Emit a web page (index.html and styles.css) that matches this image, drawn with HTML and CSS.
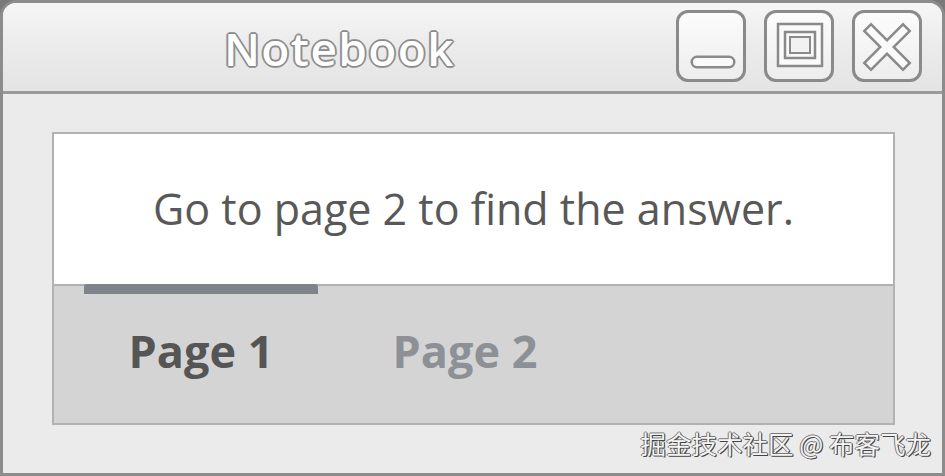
FILE: index.html
```html
<!DOCTYPE html>
<html lang="en">
<head>
    <meta charset="UTF-8">
    <title>Notebook</title>
    <link rel="stylesheet" href="styles.css">
</head>
<body>
    <div class="window">
        <div class="titlebar">
            <div class="title">Notebook</div>
            <div class="controls">
                <button class="win-btn">
                    <svg viewBox="0 0 70 72" width="70" height="72">
                        <line x1="21" y1="52" x2="53" y2="52" stroke="#8a8a8a" stroke-width="13" stroke-linecap="round"/>
                        <line x1="21" y1="52" x2="53" y2="52" stroke="#fafafa" stroke-width="8" stroke-linecap="round"/>
                    </svg>
                </button>
                <button class="win-btn">
                    <svg viewBox="0 0 70 72" width="70" height="72">
                        <rect x="14" y="14" width="44" height="42" fill="#fafafa" stroke="#8a8a8a" stroke-width="2.5"/>
                        <rect x="21" y="22" width="30" height="26" fill="none" stroke="#8a8a8a" stroke-width="2.5"/>
                        <rect x="26" y="27" width="20" height="16" fill="#f2f2f2" stroke="#8a8a8a" stroke-width="2"/>
                    </svg>
                </button>
                <button class="win-btn">
                    <svg viewBox="0 0 70 72" width="70" height="72">
                        <path d="M19 21 L51 53 M51 21 L19 53" stroke="#8a8a8a" stroke-width="12" stroke-linecap="square"/>
                        <path d="M19 21 L51 53 M51 21 L19 53" stroke="#fafafa" stroke-width="7" stroke-linecap="square"/>
                    </svg>
                </button>
            </div>
        </div>
        <div class="content">
            <div class="notebook">
                <div class="page">Go to page 2 to find the answer.</div>
                <div class="tabs">
                    <div class="tab active">Page 1</div>
                    <div class="tab">Page 2</div>
                </div>
            </div>
            <div class="watermark">掘金技术社区 @ 布客飞龙</div>
        </div>
    </div>
</body>
</html>
```

FILE: styles.css
```css
html, body {
    margin: 0;
    padding: 0;
    width: 945px;
    height: 476px;
    overflow: hidden;
    background: #7a7a7a;
}
.window {
    box-sizing: border-box;
    width: 945px;
    height: 476px;
    border: 3px solid #8c8c8c;
    border-radius: 16px 16px 0 0;
    background: #ebebeb;
    display: flex;
    flex-direction: column;
    overflow: hidden;
    font-family: "Open Sans", "Noto Sans", sans-serif;
}
.titlebar {
    height: 88px;
    flex-shrink: 0;
    display: flex;
    align-items: flex-start;
    background: linear-gradient(#f6f6f6, #ececec 45%, #e4e4e4);
    border-bottom: 3px solid #9a9a9a;
}
.title {
    flex: 1;
    text-align: center;
    font-size: 46px;
    font-weight: 600;
    line-height: 46px;
    margin-top: 22px;
    color: #ffffff;
    letter-spacing: 1.4px;
    text-shadow: 1px 1px 0 #8a8a8a, -1px -1px 0 #8a8a8a, 1px -1px 0 #8a8a8a, -1px 1px 0 #8a8a8a,
                 2px 0 0 #9a9a9a, -2px 0 0 #9a9a9a, 0 2px 0 #9a9a9a, 0 -2px 0 #9a9a9a;
}
.controls {
    display: flex;
    gap: 18px;
    padding: 7px 20px 0 0;
}
.win-btn {
    box-sizing: border-box;
    width: 70px;
    height: 72px;
    padding: 0;
    border: 3px solid #8a8a8a;
    border-radius: 12px;
    background: linear-gradient(#fcfcfc, #ededed);
    display: flex;
    align-items: center;
    justify-content: center;
    overflow: hidden;
}
.win-btn svg {
    flex-shrink: 0;
}
.content {
    flex: 1;
    display: flex;
    flex-direction: column;
    padding: 38px 47px 0 49px;
}
.notebook {
    height: 289px;
    display: flex;
    flex-direction: column;
    border: 2px solid #b2b2b2;
    background: #d4d4d4;
}
.page {
    height: 152px;
    flex-shrink: 0;
    background: #ffffff;
    display: flex;
    align-items: center;
    justify-content: center;
    font-size: 43px;
    color: #585858;
    border-bottom: 2px solid #b0b0b0;
    padding-bottom: 2px;
    box-sizing: border-box;
}
.tabs {
    flex: 1;
    display: flex;
    gap: 30px;
    padding-left: 30px;
    margin-top: -2px;
}
.tab {
    width: 234px;
    display: flex;
    align-items: center;
    justify-content: center;
    font-size: 45px;
    font-weight: 700;
    color: #8d9196;
    border-top: 10px solid transparent;
    padding-bottom: 16px;
}
.tab.active {
    color: #555555;
    border-top-color: #7f848a;
    border-radius: 3px 3px 0 0;
}
.watermark {
    align-self: flex-end;
    margin-top: 0;
    margin-right: -36px;
    font-family: "Noto Sans CJK SC", sans-serif;
    font-size: 25.5px;
    line-height: 36px;
    color: #f4f4f4;
    text-shadow: 1px 1px 0 #444, -1px 0 0 #777, 0 -1px 0 #777, 1px 0 0 #555;
}
```
